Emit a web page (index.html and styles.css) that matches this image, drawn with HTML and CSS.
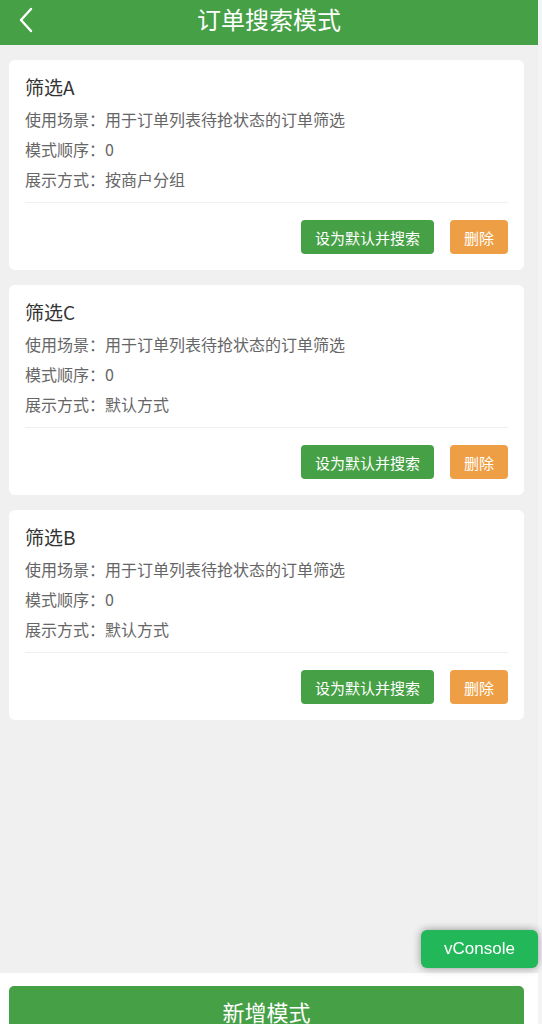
FILE: index.html
```html
<!DOCTYPE html>
<html lang="zh-CN">

<head>
    <meta charset="UTF-8">
    <meta name="viewport" content="width=device-width, initial-scale=1.0">
    <title>订单搜索模式</title>
    <link rel="stylesheet" href="styles.css">
</head>

<body>
    <div class="page">
        <div class="header">
            <a class="back">
                <svg width="16" height="26" viewBox="0 0 16 26">
                    <polyline points="13,2 3,13 13,24" fill="none" stroke="#fff" stroke-width="2.4" stroke-linecap="round" stroke-linejoin="round" />
                </svg>
            </a>
            <h1>订单搜索模式</h1>
        </div>

        <div class="list">
            <div class="card">
                <div class="title">筛选A</div>
                <p>使用场景：用于订单列表待抢状态的订单筛选</p>
                <p>模式顺序：0</p>
                <p>展示方式：按商户分组</p>
                <div class="ops">
                    <button class="btn-green">设为默认并搜索</button>
                    <button class="btn-orange">删除</button>
                </div>
            </div>
            <div class="card">
                <div class="title">筛选C</div>
                <p>使用场景：用于订单列表待抢状态的订单筛选</p>
                <p>模式顺序：0</p>
                <p>展示方式：默认方式</p>
                <div class="ops">
                    <button class="btn-green">设为默认并搜索</button>
                    <button class="btn-orange">删除</button>
                </div>
            </div>
            <div class="card">
                <div class="title">筛选B</div>
                <p>使用场景：用于订单列表待抢状态的订单筛选</p>
                <p>模式顺序：0</p>
                <p>展示方式：默认方式</p>
                <div class="ops">
                    <button class="btn-green">设为默认并搜索</button>
                    <button class="btn-orange">删除</button>
                </div>
            </div>
        </div>

        <div class="footer">
            <button class="add">新增模式</button>
        </div>
    </div>

    <div class="vconsole">vConsole</div>
</body>

</html>
```

FILE: styles.css
```css
* {
    margin: 0;
    padding: 0;
    box-sizing: border-box;
}

html,
body {
    height: 100%;
    background-color: #f4f4f6;
    font-family: "Noto Sans CJK SC", "Noto Sans", sans-serif;
}

.page {
    width: 538px;
    height: 100vh;
    overflow: hidden;
    display: flex;
    flex-direction: column;
    background-color: #f0f0f0;
}

.header {
    height: 45px;
    flex-shrink: 0;
    padding-bottom: 8px;
    background-color: #46a046;
    display: flex;
    align-items: center;
    justify-content: center;
    position: relative;
}

.header h1 {
    color: #fff;
    font-size: 24px;
    font-weight: normal;
}

.back {
    position: absolute;
    left: 18px;
    top: 7px;
}

.list {
    flex: 1;
    padding: 15px 14px 0 9px;
    display: flex;
    flex-direction: column;
    gap: 15px;
}

.card {
    background-color: #fff;
    border-radius: 6px;
    padding: 10px 16px 16px;
}

.card .title {
    font-size: 19px;
    line-height: 34px;
    color: #333;
}

.card p {
    font-size: 16px;
    line-height: 30px;
    color: #666;
}

.ops {
    margin-top: 8px;
    border-top: 1px solid #f0f0f0;
    padding-top: 17px;
    display: flex;
    justify-content: flex-end;
    gap: 16px;
}

.ops button {
    height: 34px;
    border: none;
    border-radius: 4px;
    color: #fff;
    font-size: 15px;
    font-family: inherit;
}

.btn-green {
    width: 133px;
    background-color: #46a046;
}

.btn-orange {
    width: 58px;
    background-color: #ee9f45;
}

.footer {
    height: 51px;
    flex-shrink: 0;
    overflow: hidden;
    background-color: #fff;
    padding: 13px 14px 0 9px;
}

.add {
    width: 100%;
    height: 50px;
    border: none;
    border-radius: 5px;
    background-color: #46a046;
    color: #fff;
    font-size: 22px;
    font-family: inherit;
}

.vconsole {
    position: fixed;
    right: 4px;
    bottom: 56px;
    width: 117px;
    height: 38px;
    line-height: 38px;
    text-align: center;
    border-radius: 6px;
    background-color: #22b85a;
    color: #fff;
    font-family: "Liberation Sans", Arial, sans-serif;
    font-size: 17px;
    box-shadow: 0 0 8px rgba(0, 0, 0, 0.4);
}
```
